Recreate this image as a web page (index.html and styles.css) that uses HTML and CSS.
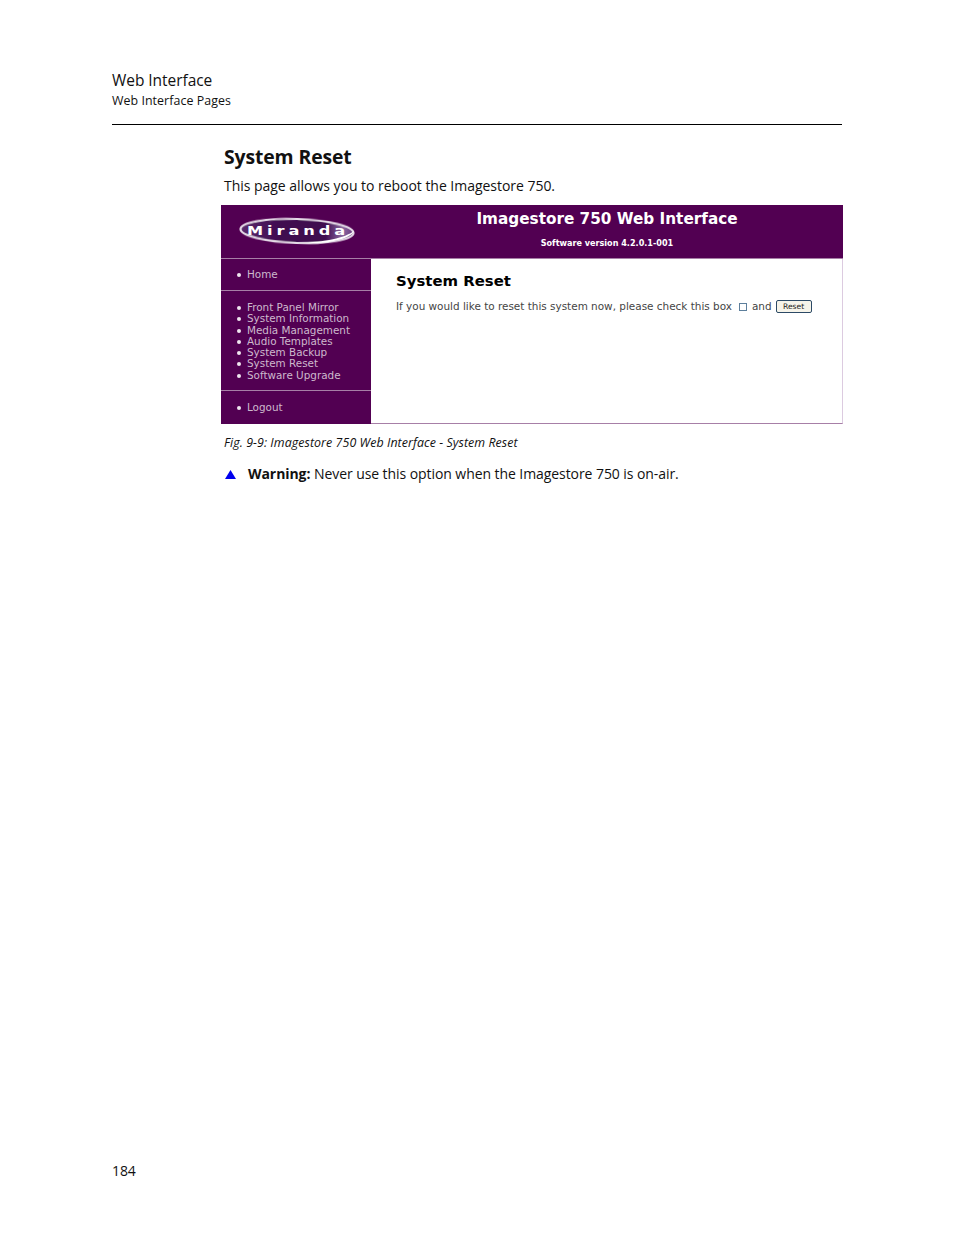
FILE: index.html
```html
<!DOCTYPE html>
<html lang="en">
<head>
<meta charset="utf-8">
<title>System Reset</title>
<link rel="stylesheet" href="styles.css">
</head>
<body>
<div class="page">
  <header class="running-head">
    <div class="chapter">Web Interface</div>
    <div class="section">Web Interface Pages</div>
  </header>
  <main class="content">
    <h1 class="title">System Reset</h1>
    <p class="intro">This page allows you to reboot the Imagestore 750.</p>
    <div class="shot">
      <div class="banner">
        <div class="logo">
          <svg width="120" height="32" viewBox="0 0 120 32">
            <defs>
              <linearGradient id="sheen" x1="0" y1="0" x2="1" y2="0">
                <stop offset="0" stop-color="#5b2a6c"/>
                <stop offset="0.35" stop-color="#3f0a50"/>
                <stop offset="0.75" stop-color="#3f0a50"/>
                <stop offset="0.9" stop-color="#8a6aa0"/>
                <stop offset="1" stop-color="#6a3a80"/>
              </linearGradient>
              <filter id="glow" x="-10%" y="-30%" width="120%" height="160%">
                <feGaussianBlur stdDeviation="0.7"/>
              </filter>
            </defs>
            <ellipse cx="60" cy="15" rx="56.5" ry="12" fill="url(#sheen)" stroke="#e6dbe8" stroke-width="2.2" transform="rotate(2 60 15)" filter="url(#glow)"/>
            <path d="M62 27 C88 29 114 23 117 15 C108 22 88 26 62 27Z" fill="#ffffff" filter="url(#glow)"/>
            <text x="10" y="18.5" class="logo-text" textLength="102" lengthAdjust="spacingAndGlyphs">Miranda</text>
          </svg>
        </div>
        <div class="banner-title">
          <div class="banner-name">Imagestore 750 Web Interface</div>
          <div class="banner-version">Software version 4.2.0.1-001</div>
        </div>
      </div>
      <div class="shot-body">
        <nav class="side">
          <ul class="nav-group nav-home"><li>Home</li></ul>
          <ul class="nav-group nav-main">
            <li>Front Panel Mirror</li>
            <li>System Information</li>
            <li>Media Management</li>
            <li>Audio Templates</li>
            <li>System Backup</li>
            <li>System Reset</li>
            <li>Software Upgrade</li>
          </ul>
          <ul class="nav-group nav-logout"><li>Logout</li></ul>
        </nav>
        <section class="panel">
          <h2 class="panel-title">System Reset</h2>
          <div class="panel-row">
            <span>If you would like to reset this system now, please check this box</span>
            <span class="check"></span>
            <span>and</span>
            <span class="reset">Reset</span>
          </div>
        </section>
      </div>
    </div>
    <p class="caption">Fig. 9-9: Imagestore 750 Web Interface - System Reset</p>
    <div class="warning">
      <svg class="warn-icon" width="11" height="9" viewBox="0 0 11 9"><polygon points="5.5,0 11,9 0,9" fill="#0000ee"/></svg>
      <p class="warn-text"><b>Warning:</b> Never use this option when the Imagestore 750 is on-air.</p>
    </div>
  </main>
  <footer class="folio">184</footer>
</div>
</body>
</html>
```
FILE: styles.css
```css
* { box-sizing: border-box; }
html, body { margin: 0; padding: 0; background: #fff; }
body { font-family: "Open Sans", "Noto Sans", sans-serif; color: #111; }
.page { width: 954px; height: 1235px; padding: 70px 112px 0; display: flex; flex-direction: column; }
.running-head { width: 730px; height: 55px; border-bottom: 1px solid #000; }
.chapter { font-size: 15.5px; line-height: 20px; letter-spacing: -0.05px; }
.section { font-size: 12.4px; line-height: 22px; letter-spacing: 0.06px; }
.content { margin-left: 109px; width: 622px; }
.title { margin: 20px 0 0 3px; font-size: 19.4px; line-height: 24px; font-weight: 700; letter-spacing: -0.12px; }
.intro { margin: 7px 0 0 3px; font-size: 14px; line-height: 20px; letter-spacing: -0.03px; }
.shot { margin-top: 9px; height: 219px; display: flex; flex-direction: column; font-family: "DejaVu Sans", sans-serif; }
.banner { height: 54px; background: #520052; border-bottom: 1px solid #a77fa7; display: flex; color: #fff; }
.logo { width: 150px; padding: 11px 0 0 16px; }
.logo svg { display: block; }
.logo-text { font-family: "DejaVu Sans", sans-serif; font-size: 12.5px; font-weight: 700; letter-spacing: 3px; fill: #fff; }
.banner-title { flex: 1; text-align: center; }
.banner-name { font-size: 15.25px; font-weight: 700; line-height: 20px; margin-top: 4px; }
.banner-version { font-size: 8.1px; font-weight: 700; line-height: 12px; margin-top: 8px; }
.shot-body { flex: 1; display: flex; }
.side { width: 150px; background: #520052; color: #cdb9cd; font-size: 10.4px; line-height: 11.3px; display: flex; flex-direction: column; }
.nav-group { margin: 0; padding: 0 0 0 26px; list-style: none; }
.nav-group li { position: relative; white-space: nowrap; }
.nav-group li::before { content: ""; position: absolute; left: -10px; top: 4px; width: 4px; height: 4px; border-radius: 50%; background: #f0e6f0; }
.nav-home { height: 32px; padding-top: 10px; border-bottom: 1px solid #a77fa7; }
.nav-main { height: 100px; padding-top: 11px; border-bottom: 1px solid #a77fa7; }
.nav-logout { flex: 1; padding-top: 11px; }
.panel { flex: 1; background: #fff; border-right: 1px solid #dccbe0; border-bottom: 1px solid #a77fa7; padding: 12px 0 0 25px; }
.panel-title { margin: 0; font-size: 14.9px; font-weight: 700; line-height: 20px; color: #000; }
.panel-row { margin-top: 7px; display: flex; align-items: center; font-size: 10.45px; line-height: 14px; color: #444; white-space: nowrap; }
.check { width: 8px; height: 8px; margin: 2px 5px 0 7px; border: 1px solid #5d7f9c; background: #fff; }
.reset { margin: 2px 0 0 4px; width: 36px; height: 13px; border: 1px solid #2c4a66; border-radius: 2px; background: #f6f4ea; font-size: 7.6px; line-height: 11px; text-align: center; color: #222; }
.caption { margin: 10px 0 0 3px; font-size: 12.4px; line-height: 18px; font-style: italic; letter-spacing: 0.07px; }
.warning { margin-top: 12px; display: flex; align-items: center; padding-left: 4px; }
.warn-icon { display: block; margin-top: 1px; }
.warn-text { margin: 0 0 0 12px; font-size: 14px; line-height: 20px; letter-spacing: -0.07px; }
.folio { margin-top: auto; margin-bottom: 54px; font-size: 14px; line-height: 20px; letter-spacing: -0.1px; }
```
